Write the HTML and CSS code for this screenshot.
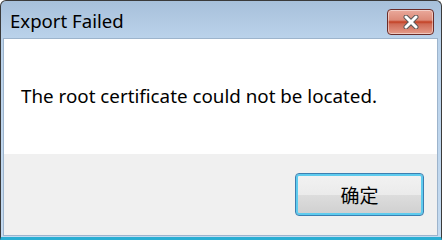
FILE: index.html
```html
<!DOCTYPE html>
<html>
<head>
<meta charset="utf-8">
<link rel="stylesheet" href="styles.css">
</head>
<body>
<div class="window">
  <div class="titlebar">
    <span class="title">Export Failed</span>
    <button class="close" aria-label="Close">
      <svg width="20" height="14" viewBox="0 0 20 14">
        <path d="M5 2 L15 12 M15 2 L5 12" stroke="#5a5a5a" stroke-width="5" stroke-linecap="round"/>
        <path d="M5 2 L15 12 M15 2 L5 12" stroke="#ffffff" stroke-width="3" stroke-linecap="round"/>
      </svg>
    </button>
  </div>
  <div class="client">
    <div class="content">
      <p class="message">The root certificate could not be located.</p>
    </div>
    <div class="footer">
      <button class="ok">确定</button>
    </div>
  </div>
</div>
</body>
</html>
```
FILE: styles.css
```css
html, body {
  margin: 0;
  padding: 0;
  background: #ffffff;
}
.window {
  width: 442px;
  height: 240px;
  box-sizing: border-box;
  border: 1px solid #3a3a3a;
  border-bottom: 3px solid #2aaed3;
  border-radius: 6px 6px 0 0;
  background: linear-gradient(#a7c0da, #bad2ea 36px, #c4daf0);
  padding: 0 3px 1px 2px;
  display: flex;
  flex-direction: column;
  font-family: "Noto Sans", "Noto Sans CJK SC", sans-serif;
}
.titlebar {
  height: 37px;
  flex: none;
  display: flex;
  align-items: center;
  justify-content: space-between;
  padding: 0 4px 0 7px;
}
.title {
  font-size: 18.6px;
  color: #000000;
  margin-top: 1px;
}
.close {
  width: 47px;
  height: 26px;
  margin-top: 4px;
  border: 1px solid #6b2c28;
  border-radius: 4px;
  background: linear-gradient(#eaa99b, #dc8a78 42%, #c23f22 50%, #cf6a55 58%, #e59c8a);
  box-shadow: inset 0 0 0 1px rgba(255,255,255,0.45);
  display: flex;
  align-items: center;
  justify-content: center;
  padding: 0;
}
.client {
  flex: 1;
  display: flex;
  flex-direction: column;
  border: 1px solid #9db4cc;
  background: #f0f0f0;
}
.content {
  background: #ffffff;
  height: 115px;
  display: flex;
  align-items: center;
}
.message {
  margin: 0 0 2px 17px;
  font-size: 18.8px;
  color: #000000;
}
.footer {
  flex: 1;
  display: flex;
  justify-content: flex-end;
  align-items: flex-start;
  padding: 19px 13px 0 0;
}
.ok {
  width: 129px;
  height: 43px;
  border: 1px solid #3c7fb1;
  border-radius: 4px;
  background: linear-gradient(#f2f2f2, #ebebeb 50%, #dddddd 51%, #cfcfcf);
  box-shadow: inset 0 0 0 2px #5ecbee;
  font-family: "Noto Sans CJK SC", sans-serif;
  font-size: 19px;
  color: #000000;
  padding: 0;
}
```
